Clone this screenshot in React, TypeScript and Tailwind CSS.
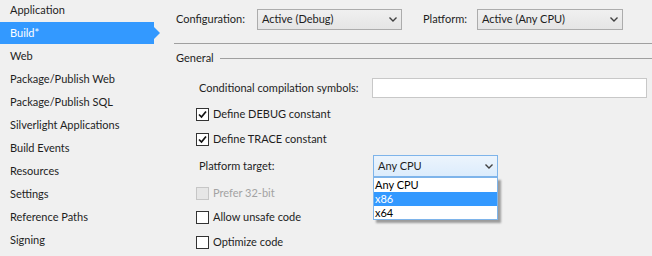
import React from "react";

const navItems = [
  "Application",
  "Build*",
  "Web",
  "Package/Publish Web",
  "Package/Publish SQL",
  "Silverlight Applications",
  "Build Events",
  "Resources",
  "Settings",
  "Reference Paths",
  "Signing",
];

const Chevron: React.FC = () => (
  <svg width="8" height="5" viewBox="0 0 8 5" className="shrink-0">
    <path d="M0.5 0.5 L4 4 L7.5 0.5" fill="none" stroke="#404040" strokeWidth="1.4" />
  </svg>
);

interface CheckBoxProps {
  label: string;
  checked?: boolean;
  disabled?: boolean;
  className?: string;
}

const CheckBox: React.FC<CheckBoxProps> = ({ label, checked, disabled, className }) => (
  <div className={`flex items-center h-[22px] pl-[36px] ${className ?? ""}`}>
    <div
      className={`w-[13px] h-[13px] border flex items-center justify-center ${
        disabled ? "border-[#c6c6c6] bg-[#e6e6e6]" : "border-[#333333] bg-white"
      }`}
    >
      {checked && (
        <svg width="9" height="9" viewBox="0 0 9 9">
          <path d="M1 4.5 L3.5 7 L8 1.5" fill="none" stroke="#111" strokeWidth="1.7" />
        </svg>
      )}
    </div>
    <span className={`ml-[4px] ${disabled ? "text-[#a3a3a3]" : "text-[#1e1e1e]"}`}>{label}</span>
  </div>
);

export default function App() {
  return (
    <div
      className="w-[652px] h-[256px] bg-[#f0f0f0] flex overflow-hidden text-[11px] text-[#1e1e1e] whitespace-nowrap"
      style={{ fontFamily: "Lato, 'Liberation Sans', sans-serif" }}
    >
      {/* Sidebar */}
      <div className="w-[160px] shrink-0 flex flex-col mt-[-1px]">
        {navItems.map((item) => {
          const active = item === "Build*";
          return (
            <div key={item} className="relative h-[23px] flex items-center">
              {active && (
                <div className="absolute left-0 top-0 w-[154px] h-[22px] bg-[#3399ff]">
                  <div className="absolute left-[154px] top-[5px] w-0 h-0 border-y-[6px] border-y-transparent border-l-[6px] border-l-[#3399ff]" />
                </div>
              )}
              <span className={`relative pl-[10px] ${active ? "text-white" : ""}`}>{item}</span>
            </div>
          );
        })}
      </div>

      {/* Main */}
      <div className="flex-1 flex flex-col">
        <div className="flex items-center mt-[9px] h-[21px] pl-[16px]">
          <span className="w-[81px] shrink-0">Configuration:</span>
          <div className="w-[145px] h-[21px] border border-[#acacac] bg-gradient-to-b from-[#f0f0f0] to-[#e5e5e5] flex items-center justify-between pl-[4px] pr-[4px]">
            <span>Active (Debug)</span>
            <Chevron />
          </div>
          <span className="w-[54px] ml-[21px] shrink-0">Platform:</span>
          <div className="w-[146px] h-[21px] border border-[#acacac] bg-gradient-to-b from-[#f0f0f0] to-[#e5e5e5] flex items-center justify-between pl-[4px] pr-[4px]">
            <span>Active (Any CPU)</span>
            <Chevron />
          </div>
        </div>

        <div className="ml-[14px] mt-[13px] h-px bg-[#a0a0a0]" />

        <div className="flex items-center h-[16px] mt-[6px] pl-[16px]">
          <span>General</span>
          <div className="flex-1 h-px bg-[#a0a0a0] ml-[6px]" />
        </div>

        <div className="flex items-center h-[20px] mt-[12px] pl-[39px]">
          <span className="w-[173px] shrink-0">Conditional compilation symbols:</span>
          <div className="w-[275px] h-[20px] border border-[#c8c8c8] bg-white" />
        </div>

        <CheckBox label="Define DEBUG constant" checked className="mt-[5px]" />
        <CheckBox label="Define TRACE constant" checked className="mt-[3px] h-[23px]" />

        <div className="flex items-center h-[22px] mt-[4px] pl-[39px]">
          <span className="w-[174px] shrink-0">Platform target:</span>
          <div className="relative">
            <div className="w-[125px] h-[22px] border border-[#7eb4ea] bg-gradient-to-b from-[#ecf4fc] to-[#dcecfc] flex items-center justify-between pl-[4px] pr-[4px]">
              <span>Any CPU</span>
              <Chevron />
            </div>
            <div className="absolute left-0 top-[22px] w-[125px] border border-[#7eb4ea] bg-white shadow-[3px_3px_2px_rgba(0,0,0,0.35)] z-10 flex flex-col">
              <div className="h-[14px] leading-[14px] pl-[1px] text-black">Any CPU</div>
              <div className="h-[14px] leading-[14px] pl-[1px] bg-[#3399ff] text-white">x86</div>
              <div className="h-[13px] leading-[13px] pl-[1px] text-black">x64</div>
            </div>
          </div>
        </div>

        <CheckBox label="Prefer 32-bit" disabled className="mt-[5px]" />
        <CheckBox label="Allow unsafe code" className="mt-[2px]" />
        <CheckBox label="Optimize code" className="mt-[3px]" />
      </div>
    </div>
  );
}
